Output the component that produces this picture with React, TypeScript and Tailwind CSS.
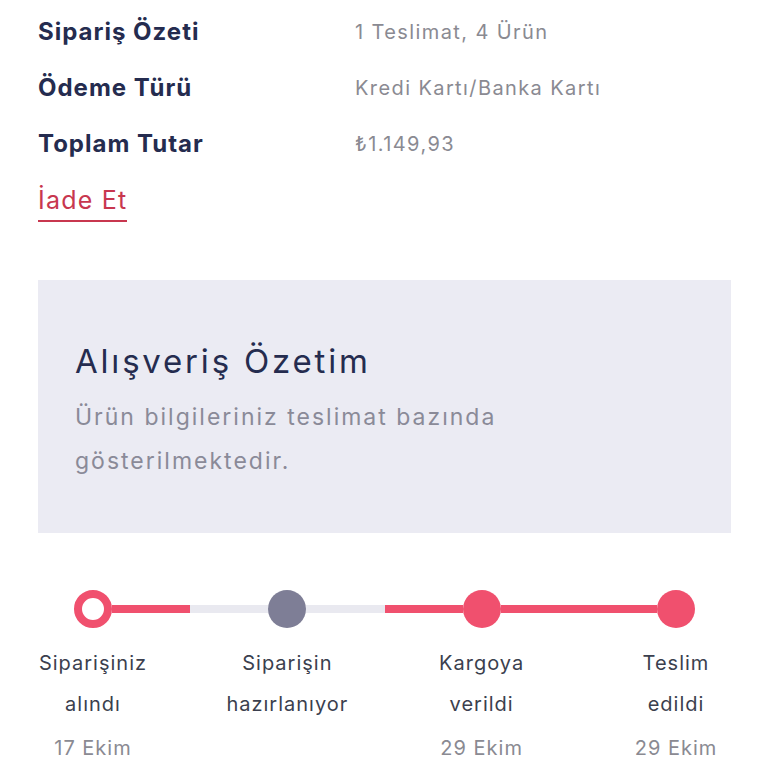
const steps = [
  { title: "Siparişiniz", sub: "alındı", date: "17 Ekim" },
  { title: "Siparişin", sub: "hazırlanıyor", date: "" },
  { title: "Kargoya", sub: "verildi", date: "29 Ekim" },
  { title: "Teslim", sub: "edildi", date: "29 Ekim" },
];

const summary = [
  { label: "Sipariş Özeti", value: "1 Teslimat, 4 Ürün" },
  { label: "Ödeme Türü", value: "Kredi Kartı/Banka Kartı" },
  { label: "Toplam Tutar", value: "₺1.149,93" },
];

export default function App() {
  return (
    <div className="w-[768px] h-[768px] overflow-hidden bg-white pl-[38px] pr-[37px] pt-1 font-['Inter',sans-serif]">
      {/* order info rows */}
      <div className="flex flex-col">
        {summary.map((row) => (
          <div key={row.label} className="flex items-center h-14">
            <div className="w-[317px] text-[24px] font-bold tracking-[1px] text-[#252c4f]">{row.label}</div>
            <div className="text-[20px] tracking-[1.4px] text-[#8a8a92]">{row.value}</div>
          </div>
        ))}
      </div>
      <a href="#" className="inline-block mt-[14px] pb-[6px] leading-[28px] text-[25px] tracking-[1.2px] text-[#c8374f] border-b-2 border-[#c8374f]">
        İade Et
      </a>

      {/* summary box */}
      <div className="mt-[58px] h-[253px] bg-[#ebebf3] px-[37px] pt-[61px]">
        <h2 className="text-[33px] leading-[40px] tracking-[2.8px] text-[#252c4f]">Alışveriş Özetim</h2>
        <p className="mt-[14px] w-[500px] text-[23px] leading-[44px] tracking-[2px] text-[#8a8a98]">
          Ürün bilgileriniz teslimat bazında gösterilmektedir.
        </p>
      </div>

      {/* tracking */}
      <div className="mt-[57px] px-[36px] flex items-center">
        <div className="w-[38px] h-[38px] rounded-full border-[8px] border-[#f0506e] bg-white" />
        <div className="flex-1 flex h-2">
          <div className="flex-1 bg-[#f0506e]" />
          <div className="flex-1 bg-[#e9e9f0]" />
        </div>
        <div className="w-[38px] h-[38px] rounded-full bg-[#7e7e96]" />
        <div className="flex-1 flex h-2">
          <div className="flex-1 bg-[#e9e9f0]" />
          <div className="flex-1 bg-[#f0506e]" />
        </div>
        <div className="w-[38px] h-[38px] rounded-full bg-[#f0506e]" />
        <div className="flex-1 h-2 bg-[#f0506e]" />
        <div className="w-[38px] h-[38px] rounded-full bg-[#f0506e]" />
      </div>
      <div className="mt-[15px] flex justify-between">
        {steps.map((s) => (
          <div key={s.title} className="w-[110px] flex flex-col items-center text-[20px] leading-[41px] tracking-[1px]">
            <span className="whitespace-nowrap text-[#3b3f4e]">{s.title}</span>
            <span className="whitespace-nowrap text-[#3b3f4e]">{s.sub}</span>
            <span className="mt-[3px] whitespace-nowrap text-[#8a8a92] h-[41px]">{s.date}</span>
          </div>
        ))}
      </div>
    </div>
  );
}
